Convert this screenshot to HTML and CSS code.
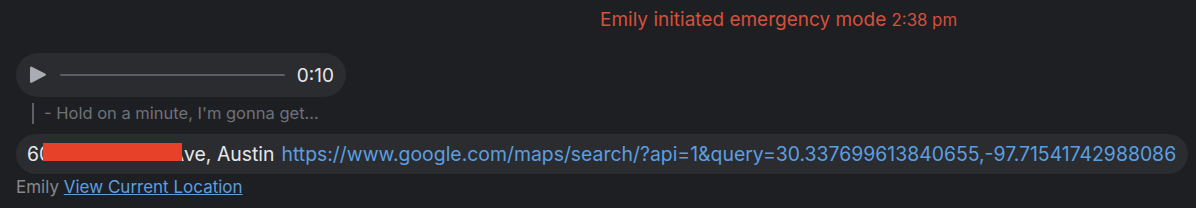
FILE: index.html
```html
<!DOCTYPE html>
<html>
<head>
<meta charset="utf-8">
<link rel="stylesheet" href="styles.css">
</head>
<body>
<div class="chat">
  <div class="system">Emily initiated emergency mode <span class="system-time">2:38 pm</span></div>

  <div class="audio">
    <svg class="play" width="20" height="20" viewBox="0 0 20 20">
      <path d="M3 3.2 Q3 0.8 5.2 1.9 L18 8.4 Q20 9.6 18 10.8 L5.2 17.6 Q3 18.7 3 16.3 Z" fill="#a9acb3"/>
    </svg>
    <div class="track"></div>
    <span class="duration">0:10</span>
  </div>

  <div class="quote">- Hold on a minute, I'm gonna get...</div>

  <div class="location">
    <span class="addr">6<span class="hidden-part"><span>0</span><span>A</span><span class="redact"></span></span>ve, Austin</span>
    <a class="url" href="#">https://www.google.com/maps/search/?api=1&amp;query=30.337699613840655,-97.7154174298808<span>6</span></a>
  </div>

  <div class="meta"><span class="sender">Emily</span> <a class="view" href="#">View Current Location</a></div>
</div>
</body>
</html>
```

FILE: styles.css
```css
html, body {
  margin: 0;
  padding: 0;
  background: #1e1f22;
}
body {
  font-family: Inter, "Noto Sans", sans-serif;
  width: 1196px;
  height: 208px;
  overflow: hidden;
}
.chat {
  display: flex;
  flex-direction: column;
  align-items: flex-start;
  padding: 8px 16px 0 16px;
}
.system {
  align-self: stretch;
  padding-left: 584px;
  color: #d5503e;
  font-size: 19px;
  line-height: 24px;
  white-space: nowrap;
}
.system-time {
  font-size: 16.8px;
}
.audio {
  margin-top: 21px;
  width: 330px;
  height: 44px;
  box-sizing: border-box;
  border-radius: 22px;
  background: #2a2c30;
  display: flex;
  align-items: center;
  padding: 0 12px 0 10px;
}
.play {
  flex: none;
  margin-left: 1px;
}
.track {
  flex: 1;
  height: 2px;
  background: #5b5e64;
  margin: 0 12px 0 13px;
  border-radius: 1px;
}
.duration {
  color: #e6e7e9;
  font-size: 19px;
}
.quote {
  margin: 6px 0 0 16px;
  border-left: 2px solid #5d6066;
  padding-left: 10px;
  color: #6f7278;
  font-size: 16.5px;
  line-height: 21px;
  white-space: nowrap;
}
.location {
  margin-top: 10px;
  height: 40px;
  box-sizing: border-box;
  border-radius: 20px;
  background: #2a2c30;
  display: flex;
  align-items: center;
  padding: 0 12px 0 11px;
  font-size: 19.4px;
  white-space: nowrap;
}
.addr {
  color: #e6e7e9;
}
.hidden-part {
  position: relative;
  display: inline-flex;
  justify-content: space-between;
  width: 145px;
  overflow: hidden;
}
.redact {
  position: absolute;
  left: 4px;
  right: 2px;
  top: 1px;
  height: 18px;
  background: #e8412a;
}
.url {
  color: #5b9fe0;
  text-decoration: none;
  margin-left: 7px;
}
.meta {
  margin-top: 3px;
  font-size: 17px;
  line-height: 20px;
  white-space: nowrap;
}
.sender {
  color: #85888d;
}
.view {
  color: #5b9fe0;
  text-decoration: underline;
}
```
